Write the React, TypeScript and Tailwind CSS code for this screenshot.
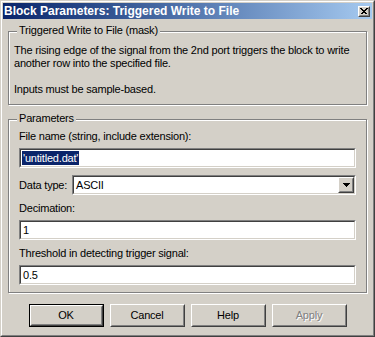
import React from "react";

const font = { fontFamily: '"Liberation Sans", Arial, sans-serif' };

function Sunken({ children, className = "" }: { children?: React.ReactNode; className?: string }) {
  return (
    <div className={`border border-t-[#808080] border-l-[#808080] border-b-white border-r-white ${className}`}>
      <div className="h-full border border-t-[#404040] border-l-[#404040] border-b-[#d4d0c8] border-r-[#d4d0c8] bg-white flex items-center">
        {children}
      </div>
    </div>
  );
}

function Raised({ children, className = "" }: { children?: React.ReactNode; className?: string }) {
  return (
    <div className={`border border-t-white border-l-white border-b-[#404040] border-r-[#404040] ${className}`}>
      <div className="h-full border border-t-[#d4d0c8] border-l-[#d4d0c8] border-b-[#808080] border-r-[#808080] bg-[#d4d0c8] flex items-center justify-center">
        {children}
      </div>
    </div>
  );
}

function Group({ label, children, className = "" }: { label: string; children: React.ReactNode; className?: string }) {
  return (
    <div className={`relative border border-[#808080] shadow-[inset_1px_1px_0_#ffffff,1px_1px_0_#ffffff] ${className}`}>
      <div className="absolute -top-[8px] left-[8px] bg-[#d4d0c8] px-[2px] leading-[13px]">{label}</div>
      {children}
    </div>
  );
}

function Button({ label, isDefault, disabled }: { label: string; isDefault?: boolean; disabled?: boolean }) {
  const inner = (
    <Raised className="w-full h-full">
      <span className={disabled ? "text-[#808080] [text-shadow:1px_1px_0_#ffffff]" : "text-black"}>{label}</span>
    </Raised>
  );
  if (isDefault) {
    return <div className="w-[75px] h-[23px] border border-black">{inner}</div>;
  }
  return <div className="w-[75px] h-[23px]">{inner}</div>;
}

export default function App() {
  return (
    <div className="w-[375px] h-[337px] border border-t-[#d4d0c8] border-l-[#d4d0c8] border-b-[#404040] border-r-[#404040] text-[11px] tracking-[-0.2px] text-black" style={font}>
      <div className="h-full border border-t-white border-l-white border-b-[#808080] border-r-[#808080] bg-[#d4d0c8] p-[1px] flex flex-col">
        {/* Title bar */}
        <div className="h-[16px] flex items-center justify-between bg-gradient-to-r from-[#0a246a] to-[#a6caf0] pl-[1px] pr-[2px]">
          <span className="text-white font-bold text-[12px] tracking-normal leading-[14px]">Block Parameters: Triggered Write to File</span>
          <Raised className="w-[12px] h-[11px]">
            <svg width="8" height="7" viewBox="0 0 8 7">
              <path d="M0.5 0.5 L6.5 6.5 M1.5 0.5 L7.5 6.5 M6.5 0.5 L0.5 6.5 M7.5 0.5 L1.5 6.5" stroke="black" strokeWidth="1" shapeRendering="crispEdges" />
            </svg>
          </Raised>
        </div>

        <div className="px-[5px] flex flex-col">
          {/* Group 1 */}
          <Group label="Triggered Write to File (mask)" className="mt-[12px] h-[74px] pl-[5px] pt-[12px]">
            <div className="leading-[13px]">
              <div>The rising edge of the signal from the 2nd port triggers the block to write</div>
              <div>another row into the specified file.</div>
              <div>&nbsp;</div>
              <div>Inputs must be sample-based.</div>
            </div>
          </Group>

          {/* Group 2 */}
          <Group label="Parameters" className="mt-[14px] pl-[10px] pr-[10px] pt-[10px] pb-[7px]">
            <div className="leading-[13px]">File name (string, include extension):</div>
            <Sunken className="mt-[5px] h-[20px]">
              <span className="ml-[1px] bg-[#0a246a] text-white leading-[14px] px-[1px]">'untitled.dat'</span>
            </Sunken>
            <div className="mt-[7px] flex items-center h-[20px]">
              <span className="w-[53px] leading-[13px]">Data type:</span>
              <Sunken className="flex-1 h-[20px]">
                <span className="ml-[2px] flex-1">ASCII</span>
                <Raised className="w-[16px] h-[16px]">
                  <svg width="7" height="4" viewBox="0 0 7 4">
                    <path d="M0 0 H7 L3.5 4 Z" fill="black" shapeRendering="crispEdges" />
                  </svg>
                </Raised>
              </Sunken>
            </div>
            <div className="mt-[7px] leading-[13px]">Decimation:</div>
            <Sunken className="mt-[5px] h-[20px]">
              <span className="ml-[2px]">1</span>
            </Sunken>
            <div className="mt-[7px] leading-[13px]">Threshold in detecting trigger signal:</div>
            <Sunken className="mt-[5px] h-[20px]">
              <span className="ml-[2px]">0.5</span>
            </Sunken>
          </Group>

          {/* Buttons */}
          <div className="mt-[11px] flex justify-center gap-[6px]">
            <Button label="OK" isDefault />
            <Button label="Cancel" />
            <Button label="Help" />
            <Button label="Apply" disabled />
          </div>
        </div>
      </div>
    </div>
  );
}
